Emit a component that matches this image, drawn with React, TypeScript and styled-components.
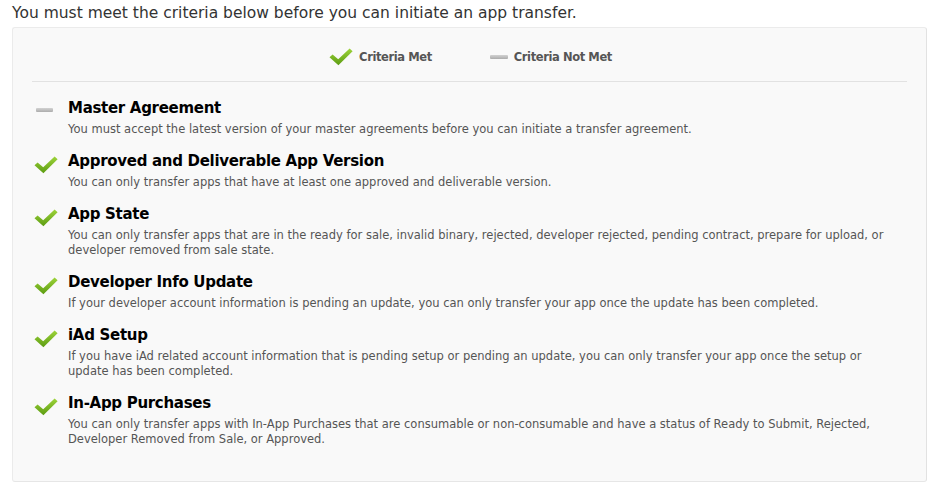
import React from "react";
import styled, { createGlobalStyle } from "styled-components";

const Global = createGlobalStyle`
  html, body { margin: 0; padding: 0; background: #ffffff; }
  body { font-family: "DejaVu Sans", "Liberation Sans", sans-serif; }
`;

const Page = styled.div`
  padding: 4px 18px 0 12px;
  width: 945px;
  box-sizing: border-box;
`;

const Intro = styled.p`
  margin: 0;
  font-size: 15.5px;
  line-height: 18px;
  color: #333333;
`;

const Panel = styled.section`
  margin-top: 5px;
  height: 455px;
  box-sizing: border-box;
  background: #f9f9f9;
  border: 1px solid #ebebeb;
  border-right-color: #e2e2e2;
  border-bottom-color: #e6e6e6;
  border-radius: 3px;
  padding: 0 19px;
`;

const Legend = styled.div`
  height: 54px;
  box-sizing: border-box;
  padding-top: 4px;
  display: flex;
  align-items: center;
  justify-content: center;
  gap: 58px;
  border-bottom: 1px solid #e2e2e2;
  padding-left: 2px;
`;

const LegendItem = styled.div`
  display: flex;
  align-items: center;
  gap: 6px;
  font-size: 11.5px;
  letter-spacing: -0.4px;
  font-weight: bold;
  color: #555555;
`;

const List = styled.ul`
  list-style: none;
  margin: 0;
  padding: 15px 0 0 2px;
`;

const Item = styled.li`
  display: grid;
  grid-template-columns: 34px 1fr;
  margin-bottom: 13px;
`;

const IconCell = styled.div<{ $met: boolean }>`
  display: flex;
  align-items: flex-start;
  padding-top: ${(p) => (p.$met ? "6px" : "11px")};
  padding-left: ${(p) => (p.$met ? "0px" : "2px")};
`;

const Title = styled.h3`
  margin: 0;
  font-size: 15px;
  letter-spacing: -0.3px;
  line-height: 22px;
  font-weight: bold;
  color: #000000;
`;

const Desc = styled.p`
  margin: 3px 0 0;
  max-width: 830px;
  font-size: 11.5px;
  line-height: 15px;
  color: #555555;
`;

const Dash = styled.span<{ $w?: number }>`
  display: block;
  width: ${(p) => p.$w ?? 17}px;
  height: 4px;
  background: linear-gradient(#d2d2d2, #acacac);
  border-radius: 1px;
`;

const Check = () => (
  <svg width={24} height={18} viewBox="0 0 24 18">
    <defs>
      <linearGradient id="chk" x1="0" y1="0" x2="0" y2="1">
        <stop offset="0" stopColor="#9ed43a" />
        <stop offset="1" stopColor="#5c9c12" />
      </linearGradient>
    </defs>
    <path
      d="M0.5 9.2 L3.6 6.4 L9.2 11.2 L20.6 0.4 L23.6 3.2 L9.4 17.2 Z"
      fill="url(#chk)"
    />
  </svg>
);

const items = [
  {
    met: false,
    title: "Master Agreement",
    desc: "You must accept the latest version of your master agreements before you can initiate a transfer agreement.",
  },
  {
    met: true,
    title: "Approved and Deliverable App Version",
    desc: "You can only transfer apps that have at least one approved and deliverable version.",
  },
  {
    met: true,
    title: "App State",
    desc: "You can only transfer apps that are in the ready for sale, invalid binary, rejected, developer rejected, pending contract, prepare for upload, or developer removed from sale state.",
  },
  {
    met: true,
    title: "Developer Info Update",
    desc: "If your developer account information is pending an update, you can only transfer your app once the update has been completed.",
  },
  {
    met: true,
    title: "iAd Setup",
    desc: "If you have iAd related account information that is pending setup or pending an update, you can only transfer your app once the setup or update has been completed.",
  },
  {
    met: true,
    title: "In-App Purchases",
    desc: "You can only transfer apps with In-App Purchases that are consumable or non-consumable and have a status of Ready to Submit, Rejected, Developer Removed from Sale, or Approved.",
  },
];

export default function App() {
  return (
    <>
      <Global />
      <Page>
        <Intro>You must meet the criteria below before you can initiate an app transfer.</Intro>
        <Panel>
          <Legend>
            <LegendItem>
              <Check />
              Criteria Met
            </LegendItem>
            <LegendItem>
              <Dash $w={18} />
              Criteria Not Met
            </LegendItem>
          </Legend>
          <List>
            {items.map((it) => (
              <Item key={it.title}>
                <IconCell $met={it.met}>{it.met ? <Check /> : <Dash />}</IconCell>
                <div>
                  <Title>{it.title}</Title>
                  <Desc>{it.desc}</Desc>
                </div>
              </Item>
            ))}
          </List>
        </Panel>
      </Page>
    </>
  );
}
